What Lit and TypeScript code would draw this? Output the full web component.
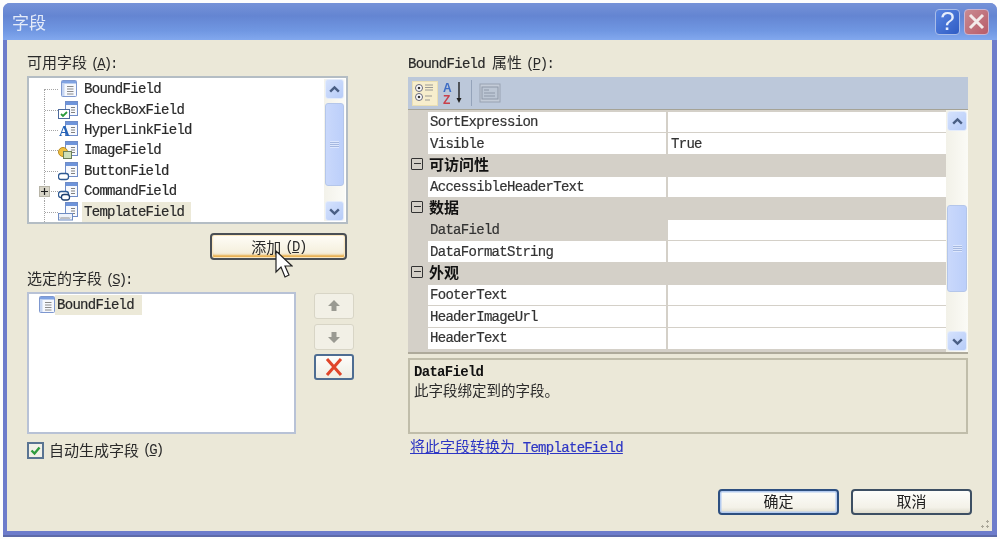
import { LitElement, html, css, svg } from "lit";
import { customElement } from "lit/decorators.js";

const page = svg`
  <rect x="7.5" y="1.5" width="12" height="14" fill="#f7f9fd" stroke="#6f8cc8"/>
  <rect x="8" y="2" width="11" height="3" fill="#6e94da"/>
  <path d="M13 7.5h4M13 10h4M13 12.5h4" stroke="#808080" fill="none"/>`;

const overlays: Record<string, unknown> = {
  bound: svg`
    <rect x="3.5" y="1.5" width="15" height="16" rx="1" fill="#f6f8fd" stroke="#7d97cf"/>
    <rect x="4" y="2" width="14" height="2.5" fill="#7fa2e2"/>
    <rect x="4" y="4.5" width="2.5" height="12.5" fill="#c6d5f2"/>
    <path d="M9 7.5h6.5M9 10h6.5M9 12.5h6.5M9 15h6.5" stroke="#8a8a8a" fill="none"/>`,
  check: svg`${page}
    <rect x="0.5" y="9.5" width="11" height="9" fill="#fff" stroke="#4d6a9c"/>
    <path d="M3 14l2 2 4-4" stroke="#2b9b3c" stroke-width="1.8" fill="none"/>`,
  link: svg`${page}
    <text x="1" y="16" font-family="Liberation Serif" font-weight="700" font-size="15" fill="#2563b8">A</text>`,
  image: svg`${page}
    <circle cx="5" cy="12" r="4.5" fill="#f0c040" stroke="#b98a20"/>
    <rect x="5.5" y="11.5" width="8" height="7" fill="#cfe0b8" stroke="#6c7f58"/>`,
  button: svg`${page}
    <rect x="0.5" y="12.5" width="10" height="6" rx="2.5" fill="#fff" stroke="#2f5a92" stroke-width="1.3"/>`,
  command: svg`${page}
    <rect x="0.5" y="10.5" width="10" height="6" rx="2.5" fill="#fff" stroke="#2f5a92" stroke-width="1.3"/>
    <rect x="3.5" y="13.5" width="8" height="5.5" rx="2.5" fill="#fff" stroke="#1f3f6e" stroke-width="1.3"/>`,
  template: svg`
    <g transform="translate(0 -1)">${page}</g>
    <rect x="0.5" y="11.5" width="14" height="6.5" fill="#eef2fa" stroke="#6f8cc2"/>
    <path d="M2 15.5l1 1 1-1 1 1 1-1 1 1 1-1 1 1 1-1 1 1 1-1" stroke="#666" fill="none" stroke-width=".8"/>`,
};

const fieldIcon = (k: string) => html`<svg class="ficon" viewBox="0 0 20 20">${overlays[k]}</svg>`;

const chev = (up: boolean) => html`<svg viewBox="0 0 12 12" class="chev">
  <path d=${up ? "M2 8l4-4 4 4" : "M2 4l4 4 4-4"} fill="none" stroke="#4a5f85" stroke-width="2.2"/></svg>`;

const treeItems: [string, string, boolean?, boolean?][] = [
  ["bound", "BoundField"],
  ["check", "CheckBoxField"],
  ["link", "HyperLinkField"],
  ["image", "ImageField"],
  ["button", "ButtonField"],
  ["command", "CommandField", true],
  ["template", "TemplateField", false, true],
];

type Row = { cat?: string; name?: string; value?: string; sel?: boolean };
const rows: Row[] = [
  { name: "SortExpression" },
  { name: "Visible", value: "True" },
  { cat: "可访问性" },
  { name: "AccessibleHeaderText" },
  { cat: "数据" },
  { name: "DataField", sel: true },
  { name: "DataFormatString" },
  { cat: "外观" },
  { name: "FooterText" },
  { name: "HeaderImageUrl" },
  { name: "HeaderText" },
];

@customElement("app-root")
export class AppRoot extends LitElement {
  static styles = css`
    :host { display: block; width: 1000px; height: 539px; background: #fdfdfd; overflow: hidden; padding: 3px 0 0 3px; box-sizing: border-box; }
    * { box-sizing: border-box; }
    .window { width: 994px; height: 534px; display: flex; flex-direction: column; border-radius: 7px 7px 0 0; overflow: hidden; filter: blur(0.5px);
      background: #6d7ccb; padding: 0 5px 6px 4px; position: relative; box-shadow: inset 0 -2px 0 #5d6aa8; }
    .title { height: 37px; margin: 0 -5px 0 -4px; padding: 0 8px 0 9px; display: flex; align-items: center; justify-content: space-between; flex: none;
      background: linear-gradient(#7592d8, #6485d2 35%, #7097e2 75%, #82a8ee); color: #e4ebf9; font: 17px "Noto Sans CJK SC", sans-serif; }
    .wbtns { display: flex; gap: 4px; }
    .wbtn { width: 25px; height: 26px; border-radius: 4px; border: 1px solid #a9bce8; display: flex; align-items: center; justify-content: center; color: #e6eefc; font: 400 26px "Liberation Sans", sans-serif; }
    .help { background: linear-gradient(135deg, #5a86e2, #2f5cc4); }
    .close { background: linear-gradient(135deg, #c98a90, #b85c6a); border-color: #c9b4d0; }
    .close svg { width: 19px; height: 19px; }
    .body { flex: 1; background: #ebe8d8; display: flex; flex-direction: column; padding: 14px 20px 16px 20px; position: relative; color: #2a2a2a; }
    .cols { display: grid; grid-template-columns: 327px 560px; column-gap: 54px; }
    .col { display: flex; flex-direction: column; }
    .label { height: 18px; line-height: 18px; white-space: nowrap; display: flex; align-items: baseline; }
    .cjk { font: 15px/16px "Noto Sans CJK SC", sans-serif; }
    .mono { font: 14px/18px "Liberation Mono", monospace; letter-spacing: -0.7px; white-space: pre; -webkit-text-stroke: 0.2px currentColor; }
    .key { font: 14px/18px "Liberation Mono", monospace; letter-spacing: -2.1px; white-space: pre; margin-left: 4px; }
    .key.wide { letter-spacing: -1.6px; }
    .mn { text-decoration: underline; }
    .tree { margin-top: 4px; height: 148px; width: 321px; border: 2px solid #b4bdc4; background: #fff; display: flex; padding: 1px 1px 1px 0; }
    .items { flex: 1; padding-left: 15px; display: flex; flex-direction: column; }
    .item { height: 20.4px; display: flex; align-items: center; flex: none; }
    .branch { width: 14px; align-self: stretch; border-left: 1px dotted #a5a5a5; position: relative; flex: none; }
    .branch::after { content: ""; position: absolute; left: 0; right: 0; top: 50%; border-top: 1px dotted #a5a5a5; }
    .branch.first { border-left-color: transparent; }
    .branch.first::before { content: ""; position: absolute; left: -1px; top: 50%; bottom: 0; border-left: 1px dotted #a5a5a5; }
    .plus { position: absolute; z-index: 1; left: -6px; top: 5px; width: 11px; height: 11px; background: #d8d5c8; border: 1px solid #b8b5a8; display: flex; align-items: center; justify-content: center; }
    .plus svg { width: 9px; height: 9px; display: block; }
    .ficon { width: 20px; height: 20px; flex: none; }
    .iname { margin-left: 4px; padding: 0 2px; height: 20px; display: flex; align-items: center; }
    .iname.sel { background: #ece9d8; padding-right: 7px; }
    .sb { width: 21px; flex: none; display: flex; flex-direction: column; background: linear-gradient(90deg, #f3f2ea, #fbfbf7); padding: 0 1px; }
    .sbbtn { height: 20px; flex: none; border-radius: 3px; background: linear-gradient(135deg, #d5e2fd, #b7ccf8); border: 1px solid #e4ecfb; display: flex; align-items: center; justify-content: center; }
    .chev { width: 13px; height: 13px; }
    .thumb { border-radius: 3px; background: linear-gradient(90deg, #c9d8fb, #bccffa); border: 1px solid #b4c6ea; display: flex; align-items: center; justify-content: center; }
    .thumb i { width: 9px; height: 7px; display: block; background: repeating-linear-gradient(#dde7fd 0 1px, #a5b8e0 1px 2px); }
    .spacer { flex: 1; }
    .t1 { margin-top: 4px; height: 83px; }
    .t2 { margin-top: 74px; height: 87px; }
    .addrow { margin-top: 9px; width: 320px; display: flex; justify-content: flex-end; }
    .add { width: 137px; height: 27px; border: 2px solid #4a4f55; border-radius: 4px; position: relative; display: flex; align-items: center; justify-content: center;
      background: linear-gradient(#fffdf7, #f6f1e0 70%, #f2e5c5); box-shadow: inset 0 0 0 1px #fbe7bf, inset 0 -3px 2px #e8ae4c; }
    .cursor { position: absolute; left: 63px; top: 15px; width: 18px; height: 28px; z-index: 3; }
    .sel-label { margin-top: 10px; }
    .listrow { margin-top: 4px; display: flex; gap: 18px; }
    .list { width: 269px; height: 142px; border: 2px solid #b8c2d6; background: #fff; padding: 1px 0 0 7px; display: flex; align-items: flex-start; }
    .bound { margin-left: -1px; padding: 0 2px; background: #ece9d8; height: 20px; display: flex; align-items: center; width: 87px; }
    .moves { display: flex; flex-direction: column; gap: 5px; padding-top: 1px; }
    .mv { width: 40px; height: 26px; border-radius: 3px; border: 1px solid #d8d5c6; background: #f2f0e6; display: flex; align-items: center; justify-content: center; }
    .mv svg { width: 14px; height: 14px; }
    .mv.del { border: 2px solid #4e6d92; background: linear-gradient(#fdfdfb, #efede3); margin-top: -1px; }
    .mv.del svg { width: 22px; height: 22px; }
    .chk { margin-top: 7px; display: flex; align-items: center; gap: 5px; height: 18px; }
    .chk .key { margin-left: -1px; letter-spacing: -2.1px; }
    .box { width: 17px; height: 17px; border: 2px solid #5a7492; background: #f2f1e8; display: flex; align-items: center; justify-content: center; }
    .box svg { width: 13px; height: 13px; }
    .toolbar { margin-top: 5px; height: 33px; background: #bcc8da; display: flex; align-items: center; padding: 0 4px; border-bottom: 1px solid #a5a396; flex: none; }
    .tb { width: 26px; height: 25px; background: #f7eecd; border: 1px solid #eadfb4; display: flex; align-items: center; justify-content: center; }
    .tb svg { width: 22px; height: 22px; }
    .az { width: 24px; height: 26px; margin-left: 4px; }
    .tsep { width: 1px; height: 26px; background: #94a3ba; margin: 0 7px 0 5px; }
    .pages { width: 22px; height: 22px; }
    .grid { height: 244px; display: flex; background: #d4d0c8; border-bottom: 2px solid #aeaa9b; overflow: hidden; flex: none; }
    .rows { flex: 1; display: flex; flex-direction: column; overflow: hidden; padding-top: 1.6px; }
    .row { height: 21.65px; flex: none; display: flex; padding-left: 20px; padding-bottom: 1px; color: #333; }
    .name { width: 238px; background: #fff; padding-left: 2px; display: flex; align-items: center; margin-right: 2px; flex: none; }
    .name.on { background: #d4d0c8; }
    .val { flex: 1; background: #fff; padding-left: 3px; display: flex; align-items: center; }
    .cat { height: 21.65px; flex: none; display: flex; align-items: flex-start; padding-left: 3px; gap: 6px; color: #111; font: 700 15px/17px "Noto Sans CJK SC", sans-serif; }
    .minus { width: 12px; height: 12px; margin-top: 3px; border: 1.5px solid #333; border-radius: 1px; position: relative; flex: none; }
    .minus::after { content: ""; position: absolute; left: 1.5px; right: 1.5px; top: 3.7px; height: 1.5px; background: #333; }
    .sbg { width: 22px; background: linear-gradient(90deg, #f2f1e8, #fbfbf6); padding: 1px; }
    .desc { margin-top: 4px; height: 76px; border: 2px solid #c0bdaa; padding: 3px 4px; display: flex; flex-direction: column; flex: none; }
    .desc b { font: 700 14px/18px "Liberation Mono", monospace; letter-spacing: -0.7px; color: #111; }
    .desc .cjk { font-size: 14.5px; line-height: 18px; }
    .link { margin-top: 4px; margin-left: 2px; color: #2d36c4; text-decoration: underline; height: 18px; display: flex; align-items: baseline; white-space: pre; }
    .footer { margin-top: auto; display: flex; justify-content: flex-end; gap: 12px; }
    .btn { width: 121px; height: 26px; padding-bottom: 3px; border-radius: 4px; border: 2px solid #3d4f63; display: flex; align-items: center; justify-content: center; background: linear-gradient(#fdfdfa, #f3f1e8 75%, #dfdccd); color: #222; }
    .btn.def { border-color: #2d4f80; box-shadow: inset 0 0 0 1.5px #b4cbf0; }
    .grip { position: absolute; right: 1px; bottom: 1px; width: 15px; height: 15px; background: radial-gradient(circle at 1.5px 1.5px, #a9a698 1px, transparent 1.3px) 0 0 / 5px 5px; clip-path: polygon(100% 0, 100% 100%, 0 100%); }
  `;

  private label(cjk: string, key: string, wide = false) {
    return html`<div class="label"><span class="cjk">${cjk}</span><span class="key ${wide ? "wide" : ""}">(<span class="mn">${key}</span>):</span></div>`;
  }

  render() {
    return html`
      <div class="window">
        <div class="title">
          <span>字段</span>
          <div class="wbtns">
            <div class="wbtn help">?</div>
            <div class="wbtn close"><svg viewBox="0 0 19 19"><path d="M3 3l13 13M16 3L3 16" stroke="#f3ebea" stroke-width="3" fill="none"/></svg></div>
          </div>
        </div>
        <div class="body">
          <div class="cols">
            <div class="col">
              ${this.label("可用字段", "A")}
              <div class="tree">
                <div class="items">
                  ${treeItems.map(([k, n, plus, sel], i) => html`
                    <div class="item">
                      <span class="branch ${i === 0 ? "first" : ""}">${plus ? html`<span class="plus"><svg viewBox="0 0 9 9"><path d="M1 4.5h7M4.5 1v7" stroke="#222" stroke-width="1.2"/></svg></span>` : ""}</span>
                      ${fieldIcon(k)}
                      <span class="iname mono ${sel ? "sel" : ""}">${n}</span>
                    </div>`)}
                </div>
                <div class="sb">
                  <div class="sbbtn">${chev(true)}</div>
                  <div class="thumb t1"><i></i></div>
                  <div class="spacer"></div>
                  <div class="sbbtn">${chev(false)}</div>
                </div>
              </div>
              <div class="addrow">
                <div class="add">
                  <span class="cjk">添加</span><span class="key wide">(<span class="mn">D</span>)</span>
                  <svg class="cursor" viewBox="0 0 18 28"><path d="M1 1v21l5-5 4 10 4-2-4-9h7z" fill="#fff" stroke="#222" stroke-width="1.2"/></svg>
                </div>
              </div>
              <div class="sel-label">${this.label("选定的字段", "S")}</div>
              <div class="listrow">
                <div class="list">
                  ${fieldIcon("bound")}
                  <span class="bound mono">BoundField</span>
                </div>
                <div class="moves">
                  <div class="mv"><svg viewBox="0 0 14 14"><path d="M7 1l6 6H9.5v5h-5V7H1z" fill="#9a9a92"/></svg></div>
                  <div class="mv"><svg viewBox="0 0 14 14"><path d="M7 13l6-6H9.5V2h-5v5H1z" fill="#9a9a92"/></svg></div>
                  <div class="mv del"><svg viewBox="0 0 22 22"><path d="M4 3l14 16M18 3L4 19" stroke="#e0452a" stroke-width="3" fill="none"/></svg></div>
                </div>
              </div>
              <div class="chk">
                <div class="box"><svg viewBox="0 0 13 13"><path d="M2.5 6.5l3 3 5-6" stroke="#2f9c3f" stroke-width="2.4" fill="none"/></svg></div>
                <span class="cjk">自动生成字段</span><span class="key">(<span class="mn">G</span>)</span>
              </div>
            </div>
            <div class="col">
              <div class="label"><span class="mono">BoundField</span><span class="cjk" style="margin-left:7px">属性</span><span class="key wide">(<span class="mn">P</span>):</span></div>
              <div class="toolbar">
                <div class="tb"><svg viewBox="0 0 22 22">
                  <circle cx="5" cy="6" r="3.5" fill="#fff" stroke="#667"/><circle cx="5" cy="6" r="1.3" fill="#333"/>
                  <circle cx="5" cy="15" r="3.5" fill="#fff" stroke="#667"/><circle cx="5" cy="15" r="1.3" fill="#333"/>
                  <path d="M11 3h8M11 5.5h8M11 8h8M11 14h7M11 18h5" stroke="#909090" stroke-width=".9" fill="none"/></svg></div>
                <svg class="az" viewBox="0 0 24 26">
                  <text x="1" y="12" font-family="Liberation Sans" font-weight="700" font-size="12" fill="#3d6cc4">A</text>
                  <text x="1" y="24" font-family="Liberation Sans" font-weight="700" font-size="12" fill="#c9404a">Z</text>
                  <path d="M17 2v18" stroke="#222" stroke-width="1.4" fill="none"/><path d="M14.5 18l2.5 5 2.5-5z" fill="#222"/>
                </svg>
                <div class="tsep"></div>
                <svg class="pages" viewBox="0 0 22 22">
                  <rect x="1" y="2" width="20" height="18" fill="#c4ccd8" stroke="#98a2b2"/>
                  <rect x="3" y="5" width="16" height="12" fill="#bcc6d4" stroke="#8e98a8"/>
                  <path d="M5 8h5M5 11h11M5 14h11" stroke="#8e98a8" fill="none"/>
                </svg>
              </div>
              <div class="grid">
                <div class="rows">
                  ${rows.map((r) => r.cat
                    ? html`<div class="cat"><span class="minus"></span><span>${r.cat}</span></div>`
                    : html`<div class="row">
                        <div class="name mono ${r.sel ? "on" : ""}">${r.name}</div>
                        <div class="val mono">${r.value ?? ""}</div>
                      </div>`)}
                </div>
                <div class="sb sbg">
                  <div class="sbbtn">${chev(true)}</div>
                  <div class="thumb t2"><i></i></div>
                  <div class="spacer"></div>
                  <div class="sbbtn">${chev(false)}</div>
                </div>
              </div>
              <div class="desc">
                <b>DataField</b>
                <span class="cjk">此字段绑定到的字段。</span>
              </div>
              <div class="link"><span class="cjk">将此字段转换为</span><span class="mono"> TemplateField</span></div>
            </div>
          </div>
          <div class="footer">
            <div class="btn def cjk">确定</div>
            <div class="btn cjk">取消</div>
          </div>
          <div class="grip"></div>
        </div>
      </div>
    `;
  }
}
